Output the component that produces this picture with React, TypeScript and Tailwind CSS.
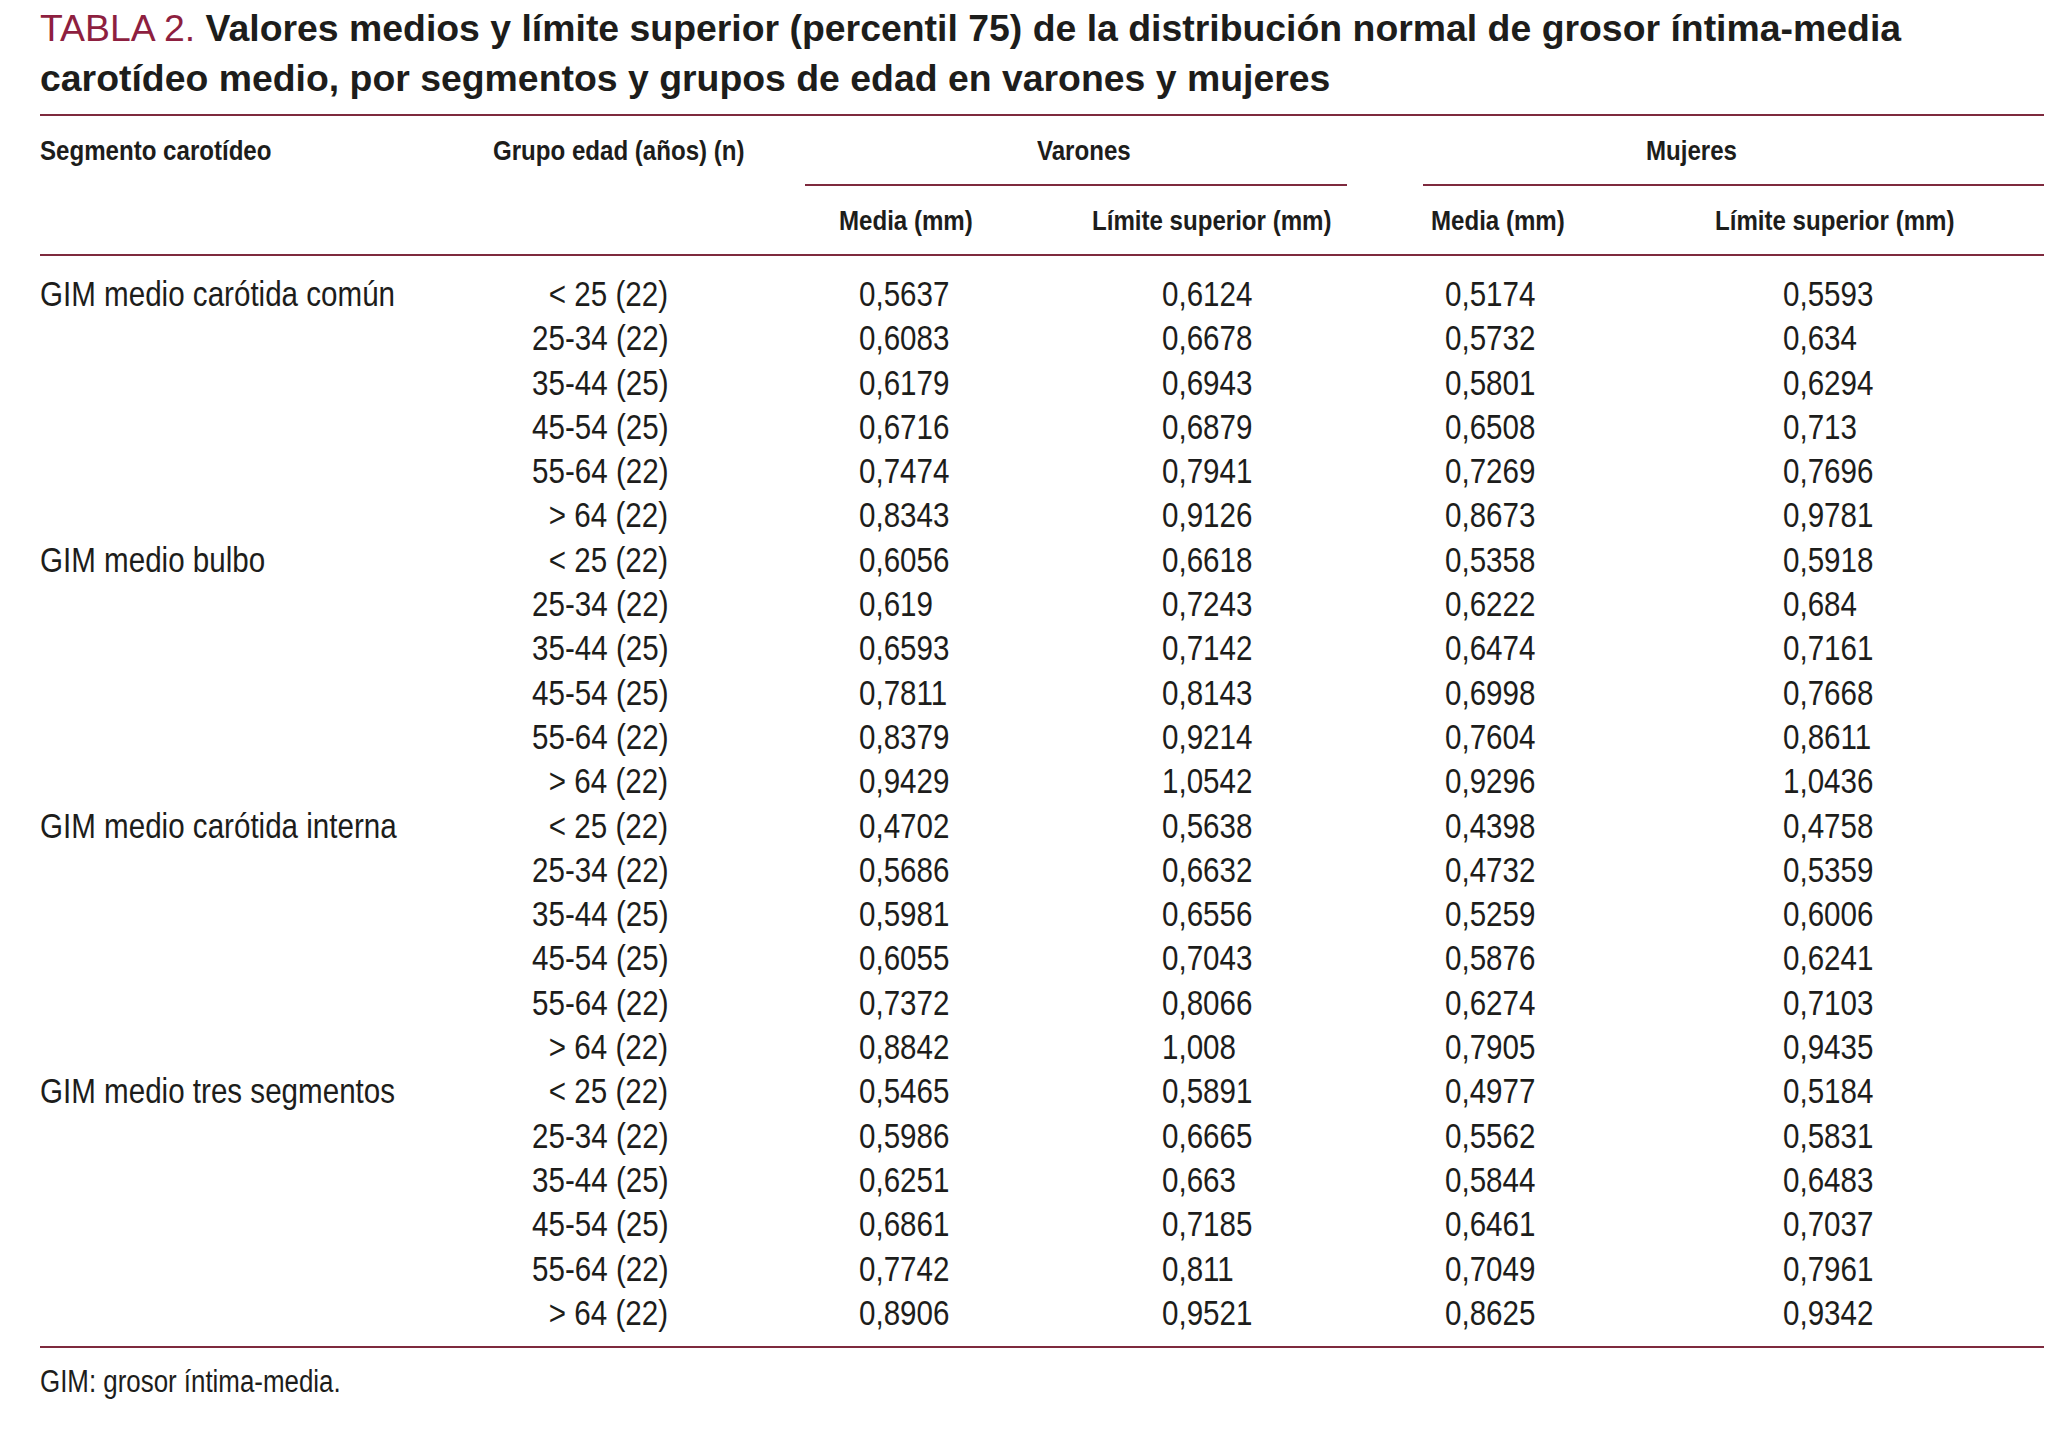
const rows: [string, string, string, string, string, string][] = [
  ["GIM medio carótida común", "< 25 (22)", "0,5637", "0,6124", "0,5174", "0,5593"],
  ["", "25-34 (22)", "0,6083", "0,6678", "0,5732", "0,634"],
  ["", "35-44 (25)", "0,6179", "0,6943", "0,5801", "0,6294"],
  ["", "45-54 (25)", "0,6716", "0,6879", "0,6508", "0,713"],
  ["", "55-64 (22)", "0,7474", "0,7941", "0,7269", "0,7696"],
  ["", "> 64 (22)", "0,8343", "0,9126", "0,8673", "0,9781"],
  ["GIM medio bulbo", "< 25 (22)", "0,6056", "0,6618", "0,5358", "0,5918"],
  ["", "25-34 (22)", "0,619", "0,7243", "0,6222", "0,684"],
  ["", "35-44 (25)", "0,6593", "0,7142", "0,6474", "0,7161"],
  ["", "45-54 (25)", "0,7811", "0,8143", "0,6998", "0,7668"],
  ["", "55-64 (22)", "0,8379", "0,9214", "0,7604", "0,8611"],
  ["", "> 64 (22)", "0,9429", "1,0542", "0,9296", "1,0436"],
  ["GIM medio carótida interna", "< 25 (22)", "0,4702", "0,5638", "0,4398", "0,4758"],
  ["", "25-34 (22)", "0,5686", "0,6632", "0,4732", "0,5359"],
  ["", "35-44 (25)", "0,5981", "0,6556", "0,5259", "0,6006"],
  ["", "45-54 (25)", "0,6055", "0,7043", "0,5876", "0,6241"],
  ["", "55-64 (22)", "0,7372", "0,8066", "0,6274", "0,7103"],
  ["", "> 64 (22)", "0,8842", "1,008", "0,7905", "0,9435"],
  ["GIM medio tres segmentos", "< 25 (22)", "0,5465", "0,5891", "0,4977", "0,5184"],
  ["", "25-34 (22)", "0,5986", "0,6665", "0,5562", "0,5831"],
  ["", "35-44 (25)", "0,6251", "0,663", "0,5844", "0,6483"],
  ["", "45-54 (25)", "0,6861", "0,7185", "0,6461", "0,7037"],
  ["", "55-64 (22)", "0,7742", "0,811", "0,7049", "0,7961"],
  ["", "> 64 (22)", "0,8906", "0,9521", "0,8625", "0,9342"],
];

// table columns: segment | age | V media | V límite | M media | M límite
const cols = "grid grid-cols-[453px_312px_271px_271px_306px_391px]";

// condensed look (the print uses a condensed grotesque)
function Hd({ children }: { children: React.ReactNode }) {
  return <span className="inline-block origin-left scale-x-[0.86] whitespace-nowrap">{children}</span>;
}
function Cell({ children, right }: { children: React.ReactNode; right?: boolean }) {
  return (
    <span className={right ? "inline-block origin-right scale-x-[0.845] whitespace-nowrap" : "inline-block origin-left scale-x-[0.845] whitespace-nowrap"}>
      {children}
    </span>
  );
}

export default function App() {
  return (
    <div className="min-h-screen bg-white pl-[40px] pr-[22px] text-[#1d1d1b] font-['Liberation_Sans',Arial,sans-serif]">
      <h1 className="pt-[3px] pb-[1px] text-[37.4px] leading-[50px] font-bold">
        <span className="font-normal text-[#8e1f40]">TABLA 2.</span>{" "}
        Valores medios y límite superior (percentil 75) de la distribución normal de grosor íntima-media
        carotídeo medio, por segmentos y grupos de edad en varones y mujeres
      </h1>

      <div className="mt-[10px] h-[2px] bg-[#7e2a3e]" />

      {/* header */}
      <div className={`${cols} text-[28px] font-bold`}>
        <div className="flex h-[68px] items-center pt-[2px]"><Hd>Segmento carotídeo</Hd></div>
        <div className="flex h-[68px] items-center pt-[2px]"><Hd>Grupo edad (años) (n)</Hd></div>
        <div className="col-span-2 flex h-[68px] items-center pt-[2px] pl-[232px]"><Hd>Varones</Hd></div>
        <div className="col-span-2 flex h-[68px] items-center pt-[2px] pl-[299px]"><Hd>Mujeres</Hd></div>

        <div />
        <div />
        <div className="col-span-2 h-[2px] bg-[#7e2a3e]" />
        <div className="col-span-2 ml-[76px] h-[2px] bg-[#7e2a3e]" />

        <div className="h-[68px]" />
        <div className="h-[68px]" />
        <div className="flex h-[68px] items-center pt-[2px] pl-[34px]"><Hd>Media (mm)</Hd></div>
        <div className="flex h-[68px] items-center pt-[2px] pl-[16px]"><Hd>Límite superior (mm)</Hd></div>
        <div className="flex h-[68px] items-center pt-[2px] pl-[84px]"><Hd>Media (mm)</Hd></div>
        <div className="flex h-[68px] items-center pt-[2px] pl-[62px]"><Hd>Límite superior (mm)</Hd></div>
      </div>

      <div className="h-[2px] bg-[#7e2a3e]" />

      {/* body */}
      <div className={`${cols} pt-[16px] pb-[11px] text-[35px] leading-[44.3px]`}>
        {rows.map((r, i) => (
          <div key={i} className="contents">
            <div><Cell>{r[0]}</Cell></div>
            <div className="pr-[137px] text-right"><Cell right>{r[1]}</Cell></div>
            <div className="pl-[54px]"><Cell>{r[2]}</Cell></div>
            <div className="pl-[86px]"><Cell>{r[3]}</Cell></div>
            <div className="pl-[98px]"><Cell>{r[4]}</Cell></div>
            <div className="pl-[130px]"><Cell>{r[5]}</Cell></div>
          </div>
        ))}
      </div>

      <div className="h-[2px] bg-[#7e2a3e]" />

      <p className="mt-[14px] text-[31px] leading-[40px]">
        <span className="inline-block origin-left scale-x-[0.835]">GIM: grosor íntima-media.</span>
      </p>
    </div>
  );
}
